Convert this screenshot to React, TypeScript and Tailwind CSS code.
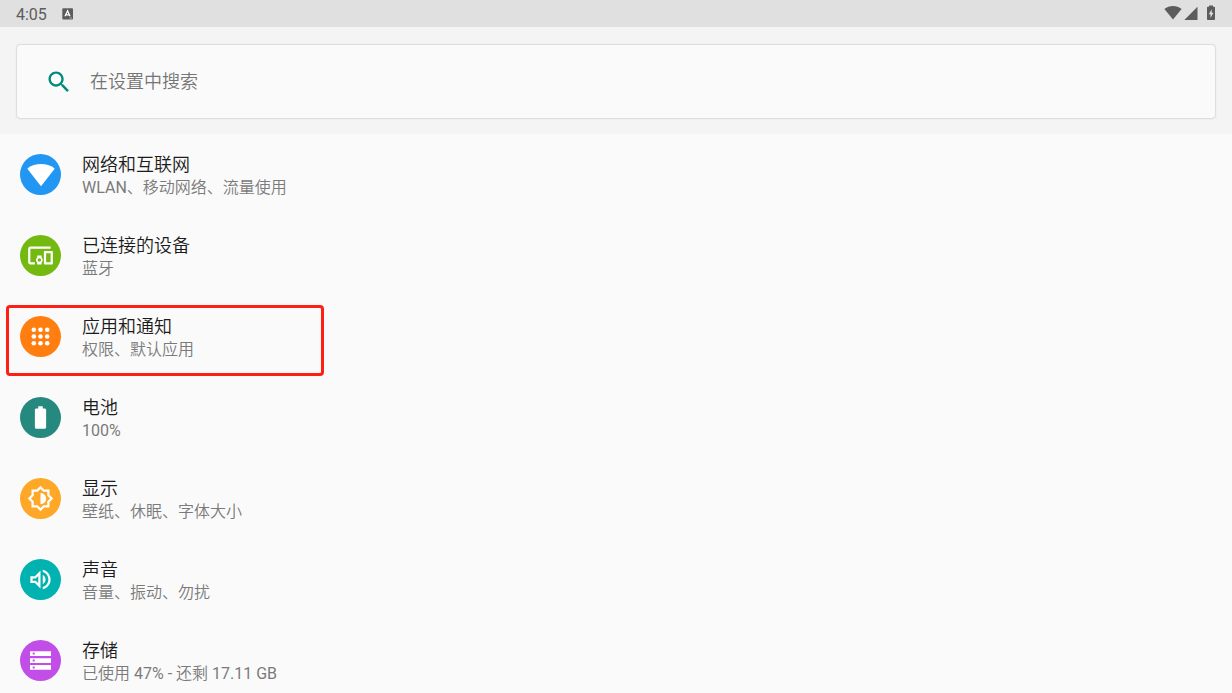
import type { ReactNode } from "react";

type Setting = {
  title: string;
  summary: string;
  color: string;
  icon: ReactNode;
  highlighted?: boolean;
};

const iconClass = "size-[27px] fill-white";

const settings: Setting[] = [
  {
    title: "网络和互联网",
    summary: "WLAN、移动网络、流量使用",
    color: "bg-[#2196f3]",
    icon: (
      <svg viewBox="0 0 28 28" className="size-7 fill-white" aria-hidden="true">
        <path d="M14 25.2 L0.9 8.6 C0.5 8 0.5 7.3 1 6.9 C4.4 4.4 9 3 14 3 C19 3 23.6 4.4 27 6.9 C27.5 7.3 27.5 8 27.1 8.6 Z" />
      </svg>
    ),
  },
  {
    title: "已连接的设备",
    summary: "蓝牙",
    color: "bg-[#74b90f]",
    icon: (
      <svg viewBox="0 0 24 24" className={iconClass} aria-hidden="true">
        <path d="M3 6h18V4H3c-1.1 0-2 .9-2 2v12c0 1.1.9 2 2 2h4v-2H3V6zm10 6H9v1.78c-.61.55-1 1.33-1 2.22s.39 1.67 1 2.22V20h4v-1.78c.61-.55 1-1.34 1-2.22s-.39-1.67-1-2.22V12zm-2 5.5c-.83 0-1.5-.67-1.5-1.5s.67-1.5 1.5-1.5 1.5.67 1.5 1.5-.67 1.5-1.5 1.5zM22 8h-6c-.5 0-1 .5-1 1v10c0 .5.5 1 1 1h6c.5 0 1-.5 1-1V9c0-.5-.5-1-1-1zm-1 10h-4v-8h4v8z" />
      </svg>
    ),
  },
  {
    title: "应用和通知",
    summary: "权限、默认应用",
    color: "bg-[#ff7e0f]",
    highlighted: true,
    icon: (
      <svg viewBox="0 0 27 27" className={iconClass} aria-hidden="true">
        {[6.8, 13.5, 20.2].map((cy) =>
          [6.8, 13.5, 20.2].map((cx) => <circle key={`${cx}-${cy}`} cx={cx} cy={cy} r="2.3" />),
        )}
      </svg>
    ),
  },
  {
    title: "电池",
    summary: "100%",
    color: "bg-[#26897f]",
    icon: (
      <svg viewBox="0 0 24 24" className={iconClass} aria-hidden="true">
        <path d="M15.67 4H14V2h-4v2H8.33C7.6 4 7 4.6 7 5.33v15.33C7 21.4 7.6 22 8.33 22h7.33c.74 0 1.34-.6 1.34-1.33V5.33C17 4.6 16.4 4 15.67 4z" />
      </svg>
    ),
  },
  {
    title: "显示",
    summary: "壁纸、休眠、字体大小",
    color: "bg-[#ffa726]",
    icon: (
      <svg viewBox="0 0 24 24" className={iconClass} aria-hidden="true">
        <path
          fillRule="evenodd"
          d="M20 15.31L23.31 12 20 8.69V4h-4.69L12 .69 8.69 4H4v4.69L.69 12 4 15.31V20h4.69L12 23.31 15.31 20H20v-4.69zM18 14.48V18h-3.52L12 20.48 9.52 18H6v-3.52L3.52 12 6 9.52V6h3.52L12 3.52 14.48 6H18v3.52L20.48 12 18 14.48z"
        />
        <path d="M12 17c2.76 0 5-2.24 5-5s-2.24-5-5-5v10z" />
      </svg>
    ),
  },
  {
    title: "声音",
    summary: "音量、振动、勿扰",
    color: "bg-[#00b2b0]",
    icon: (
      <svg viewBox="0 0 24 24" className={iconClass} aria-hidden="true">
        <path d="M3 9v6h4l5 5V4L7 9H3zm7-.17v6.34L7.83 13H5v-2h2.83L10 8.83zM16.5 12c0-1.77-1.02-3.29-2.5-4.03v8.05c1.48-.73 2.5-2.25 2.5-4.02zM14 3.23v2.06c2.89.86 5 3.54 5 6.71s-2.11 5.85-5 6.71v2.06c4.01-.91 7-4.49 7-8.77s-2.99-7.86-7-8.77z" />
      </svg>
    ),
  },
  {
    title: "存储",
    summary: "已使用 47% - 还剩 17.11 GB",
    color: "bg-[#c14ee6]",
    icon: (
      <svg viewBox="0 0 27 27" className={iconClass} aria-hidden="true">
        <path
          fillRule="evenodd"
          d="M3 4.3h21v4.7H3zM5.7 5.6v2h2v-2zM3 11.2h21v4.7H3zM5.7 12.5v2h2v-2zM3 18.1h21v4.7H3zM5.7 19.4v2h2v-2z"
        />
      </svg>
    ),
  },
];

function StatusBar() {
  return (
    <header className="flex h-[27px] items-center justify-between bg-[#e0e0e0] px-4 text-[#5c5c5c]">
      <div className="flex items-center gap-[15px]">
        <time className="pt-[2px] text-base leading-6">4:05</time>
        <svg viewBox="0 0 12 12" className="size-3" aria-hidden="true">
          <rect x="0.3" y="0.2" width="10.7" height="11.2" rx="1" fill="#5c5c5c" />
          <path d="M3 8.2 5.6 2.8 8 8.2M4 6.8h3.2" fill="none" stroke="#fff" strokeWidth="1.3" />
          <path d="M7.5 10h2.5" stroke="#aaa" strokeWidth="1" />
        </svg>
      </div>
      <div className="flex items-center pb-px">
        <svg viewBox="0 0 18 14" className="h-[14px] w-[18px] fill-current" aria-hidden="true">
          <path d="M9 13.6 L0.4 2.9 C2.8 1 5.8 0 9 0 C12.2 0 15.2 1 17.6 2.9 Z" />
        </svg>
        <svg viewBox="0 0 14 14" className="ml-[2px] size-[14px] fill-current" aria-hidden="true">
          <path d="M0.3 14 L13.5 0.8 V14 Z" />
        </svg>
        <svg viewBox="0 0 10 16" className="ml-2 h-4 w-[10px] fill-current" aria-hidden="true">
          <path
            fillRule="evenodd"
            d="M3 0.4h4v1.4h1.2c.5 0 .8.3.8.8v11.6c0 .5-.3.8-.8.8H1.8c-.5 0-.8-.3-.8-.8V2.6c0-.5.3-.8.8-.8H3zM5.7 4.2 2.8 9.3h1.7v3.6l2.9-5.2H5.7z"
          />
        </svg>
      </div>
    </header>
  );
}

function SearchBar() {
  return (
    <div className="bg-[#f4f4f4] px-[17px] pt-[18px] pb-4">
      <label className="flex h-[73px] items-center gap-[17px] rounded-[3px] bg-[#fafafa] pl-7 shadow-[0_0_2px_rgba(0,0,0,0.35)]">
        <svg viewBox="0 0 24 24" className="size-7 fill-[#00897b]" aria-hidden="true">
          <path d="M15.5 14h-.79l-.28-.27C15.41 12.59 16 11.11 16 9.5 16 5.91 13.09 3 9.5 3S3 5.91 3 9.5 5.91 16 9.5 16c1.61 0 3.09-.59 4.23-1.57l.27.28v.79l5 4.99L20.49 19l-4.99-5zm-6 0C7.01 14 5 11.99 5 9.5S7.01 5 9.5 5 14 7.01 14 9.5 11.99 14 9.5 14z" />
        </svg>
        <input
          type="search"
          aria-label="在设置中搜索"
          placeholder="在设置中搜索"
          className="min-w-0 flex-1 bg-transparent text-lg leading-6 outline-none placeholder:text-[#757575]"
        />
      </label>
    </div>
  );
}

function SettingRow({ title, summary, color, icon, highlighted }: Setting) {
  return (
    <li className="relative">
      <button type="button" className="flex h-[81px] w-full items-center gap-[21px] pl-5 text-left">
        <span className={`flex size-[41px] shrink-0 items-center justify-center rounded-full ${color}`}>
          {icon}
        </span>
        <span className="flex flex-col pt-[3px]">
          <span className="text-lg leading-6 text-[#1c1c1c]">{title}</span>
          <span className="text-base leading-[22px] text-[#7a7a7a]">{summary}</span>
        </span>
      </button>
      {highlighted && (
        <span className="pointer-events-none absolute top-[9px] left-[6px] h-[71px] w-[318px] rounded-[4px] border-3 border-[#ff1e14]" />
      )}
    </li>
  );
}

export default function App() {
  return (
    <div className="h-screen overflow-hidden bg-[#fafafa] font-[Roboto,'Noto_Sans_CJK_SC_DemiLight','Noto_Sans_CJK_SC_Light','Noto_Sans_CJK_SC',sans-serif]">
      <StatusBar />
      <main>
        <SearchBar />
        <ul>
          {settings.map((setting) => (
            <SettingRow key={setting.title} {...setting} />
          ))}
        </ul>
      </main>
    </div>
  );
}
